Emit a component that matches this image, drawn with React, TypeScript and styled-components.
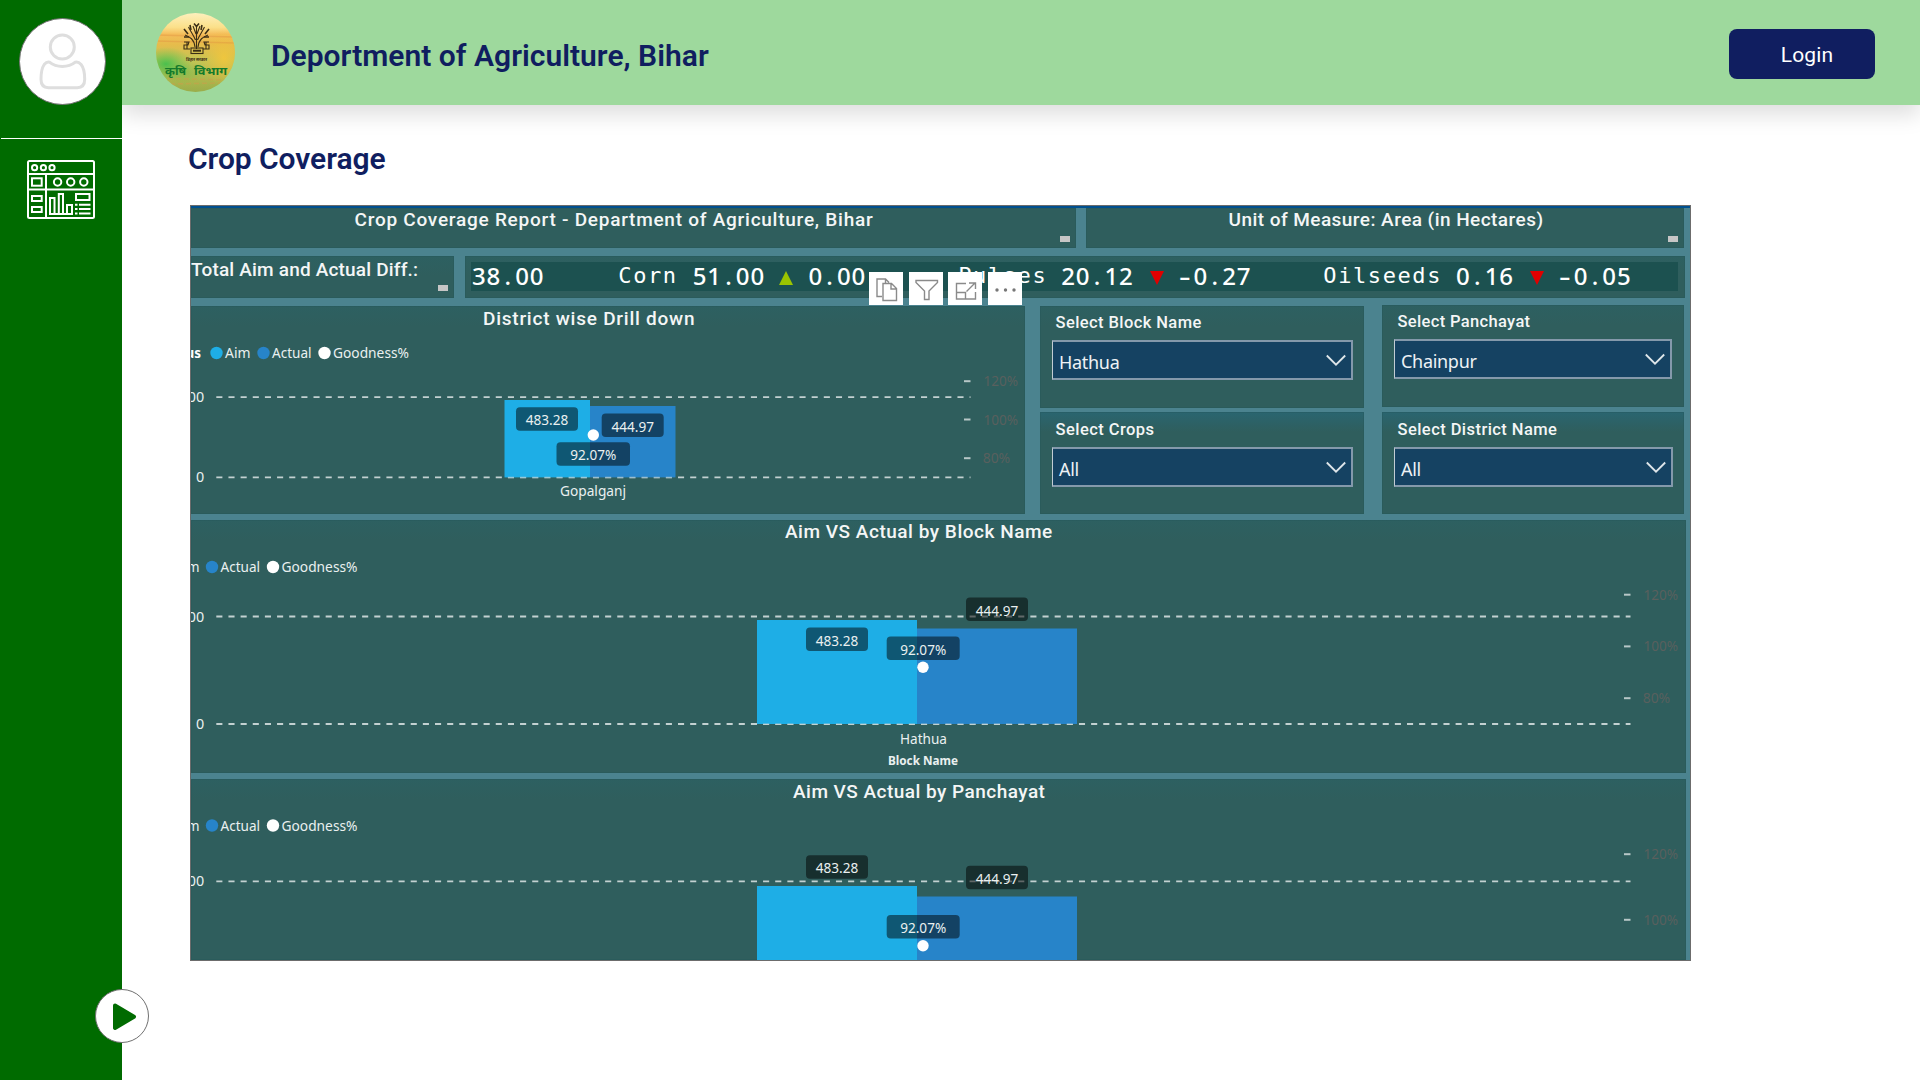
import React from 'react';
import styled, { createGlobalStyle } from 'styled-components';

const GlobalStyle = createGlobalStyle`
  *, *::before, *::after { box-sizing: border-box; }
  body { margin: 0; background: #fff; font-family: Roboto, "Noto Sans", sans-serif; }
`;

const NAVY = '#101e60';
const PANEL = '#2f5e5d';
const GAP = '#4b838f';
const AIM = '#1eaee6';
const ACTUAL = '#2784c9';

/* ---------- page shell ---------- */

const Page = styled.div`
  display: flex;
  width: 1920px;
  height: 1080px;
  overflow: hidden;
  background: #fff;
`;

const Sidebar = styled.aside`
  position: relative;
  z-index: 2;
  flex: none;
  display: flex;
  flex-direction: column;
  align-items: center;
  width: 122px;
  background: #006b00;
`;

const Avatar = styled.div`
  width: 87px;
  height: 87px;
  margin: 18px 0 33px 3px;
  border: 1px solid #707070;
  border-radius: 50%;
  background: #fff;
`;

const Divider = styled.hr`
  width: 121px;
  height: 1px;
  margin: 0 0 0 1px;
  border: 0;
  background: #fff;
`;

const NavItem = styled.a`
  display: block;
  margin-top: 21px;
  height: 59px;
`;

const ExpandButton = styled.button`
  position: absolute;
  right: -27px;
  bottom: 37px;
  width: 54px;
  height: 54px;
  padding: 0;
  border: 1px solid #707070;
  border-radius: 50%;
  background: #fff;
`;

const Main = styled.div`
  flex: 1;
  display: flex;
  flex-direction: column;
`;

const Header = styled.header`
  flex: none;
  display: flex;
  align-items: center;
  height: 105px;
  padding: 0 45px 0 34px;
  background: #9ed99d;
  box-shadow: 0 10px 20px rgba(0, 0, 0, 0.13);
`;

const HeaderTitle = styled.h1`
  margin: 7px 0 0 36px;
  font-size: 30px;
  font-weight: 600;
  line-height: 40px;
  letter-spacing: 0.02px;
  color: ${NAVY};
`;

const LoginButton = styled.button`
  width: 146px;
  height: 50px;
  margin: 3px 0 0 auto;
  padding: 1px 0 0 10px;
  border: 0;
  border-radius: 8px;
  background: ${NAVY};
  color: #fff;
  font: 400 21px/50px Roboto, sans-serif;
  letter-spacing: 0.1px;
`;

const Content = styled.main`
  padding: 34px 0 0 68px;
`;

const PageTitle = styled.h2`
  margin: 0 0 26px -2px;
  font-size: 30px;
  font-weight: 600;
  line-height: 40px;
  letter-spacing: -0.05px;
  color: ${NAVY};
`;

/* ---------- report ---------- */

const Report = styled.section`
  position: relative;
  display: flex;
  flex-direction: column;
  width: 1501px;
  height: 756px;
  border: 1px solid #6c6c6c;
  background: ${GAP};
  overflow: hidden;
`;

const TopLine = styled.div`
  flex: none;
  height: 2px;
  background: #00508f;
`;

const Row = styled.div<{ $h: number; $gap: number; $after?: number }>`
  flex: none;
  display: flex;
  gap: ${p => p.$gap}px;
  height: ${p => p.$h}px;
  margin-bottom: ${p => p.$after ?? 0}px;
`;

const Panel = styled.div<{ $w: number; $tint?: string }>`
  flex: none;
  display: flex;
  flex-direction: column;
  width: ${p => p.$w}px;
  background: linear-gradient(${p => p.$tint ?? '#2d6061'}, ${PANEL} 20px);
  box-shadow: inset 0 0 0 1px rgba(35, 85, 90, 0.35);
  overflow: hidden;
`;

const PanelTitle = styled.h3<{ $lh: number; $ls?: number; $left?: number }>`
  flex: none;
  margin: 0;
  padding-left: ${p => p.$left ?? 0}px;
  font-size: 19px;
  font-weight: 500;
  line-height: ${p => p.$lh}px;
  letter-spacing: ${p => p.$ls ?? 0}px;
  white-space: pre;
  color: #f4f6f6;
`;

const Handle = styled.div<{ $top?: number }>`
  flex: none;
  align-self: flex-end;
  width: 10px;
  height: 6px;
  margin: ${p => p.$top ?? 5}px 6px 0 0;
  background: #c6c6c6;
`;

const Ticker = styled.div`
  display: flex;
  align-items: center;
  height: 29px;
  margin: 6px 7px 0 6px;
  padding: 0 0 2px 1px;
  background: #1c5150;
  color: #fff;
  white-space: pre;
`;

const TickerName = styled.span<{ $before: number }>`
  margin-left: ${p => p.$before}px;
  font: 400 22px/26px "DejaVu Sans Mono", monospace;
  letter-spacing: 1.6px;
`;

const TickerValue = styled.span<{ $before: number }>`
  margin-left: ${p => p.$before}px;
  font: 500 24px/26px "Noto Sans", sans-serif;
  letter-spacing: 0.85px;
`;

const Point = styled.span`
  padding: 0 3.3px;
`;

const Minus = styled.span`
  display: inline-block;
  width: 15px;
  transform: scaleX(1.5);
  transform-origin: left;
`;

const SelectColumn = styled.div<{ $w: number; $raise?: number; $left?: number }>`
  display: grid;
  grid-template-rows: 102px 102px;
  gap: ${p => 4 + (p.$raise ?? 0)}px;
  width: ${p => p.$w}px;
  margin: ${p => -(p.$raise ?? 0)}px 0 0 ${p => p.$left ?? 0}px;
`;

const SelectLabel = styled.label<{ $lh: number; $ls: number }>`
  padding-left: 15.5px;
  font-size: 16.5px;
  font-weight: 500;
  line-height: ${p => p.$lh}px;
  letter-spacing: ${p => p.$ls}px;
  color: #f4f6f6;
`;

const SelectBox = styled.div<{ $w: number }>`
  display: flex;
  justify-content: space-between;
  width: ${p => p.$w}px;
  height: 40px;
  margin-left: 12px;
  padding: 3px 5px 0 6px;
  border: 2px solid #8499ab;
  border-left: 1px solid #c2ccd4;
  background: #154262;
  font: 400 18px/34px "Noto Sans", sans-serif;
  letter-spacing: -0.3px;
  color: #eef2f5;
`;

const Chevron = styled.svg`
  margin-top: 9px;
`;

const Chart = styled.svg`
  display: block;
  flex: none;
  font-family: "Noto Sans", sans-serif;
`;

const Toolbar = styled.div`
  position: absolute;
  left: 678px;
  top: 66px;
  display: flex;
  gap: 5.5px;
`;

const Tool = styled.button`
  width: 34px;
  height: 33px;
  padding: 0;
  border: 0;
  background: #fff;
  svg { display: block; }
`;

/* ---------- chart parts ---------- */

type LabelBox = { x: number; y: number; w?: number; text: string };

function ChartText({ x, y, w, size = 14, children, fill = '#eaf0f0', weight = 400 }: {
  x: number; y: number; w: number; size?: number; children: string; fill?: string; weight?: number;
}) {
  return (
    <text x={x} y={y - 0.2} textLength={w} lengthAdjust="spacingAndGlyphs" fontSize={size} fontWeight={weight} fill={fill}>
      {children}
    </text>
  );
}

function DataLabel({ x, y, w = 62, text }: LabelBox) {
  const textWidth = text.endsWith('%') ? 46 : 42.5;
  return (
    <g>
      <rect x={x} y={y} width={w} height={23.5} rx={4} fill="#000" opacity={0.5} />
      <ChartText x={x + (w - textWidth) / 2} y={y + 18.3} w={textWidth}>{text}</ChartText>
    </g>
  );
}

function Legend({ x, y, lead }: { x: number; y: number; lead: 'full' | 'short' }) {
  return (
    <g>
      {lead === 'full' ? (
        <>
          <ChartText x={185.5} y={y + 5.5} w={15.5} weight={700} fill="#fff">us</ChartText>
          <circle cx={216.5} cy={y} r={6.2} fill={AIM} />
          <ChartText x={225} y={y + 5.5} w={25.5}>Aim</ChartText>
        </>
      ) : (
        <ChartText x={187} y={y + 5.5} w={12.5}>m</ChartText>
      )}
      <circle cx={x} cy={y} r={6.2} fill={ACTUAL} />
      <ChartText x={x + 8.5} y={y + 5.5} w={39.5}>Actual</ChartText>
      <circle cx={x + 61} cy={y} r={6.2} fill="#fff" />
      <ChartText x={x + 69.5} y={y + 5.5} w={76}>Goodness%</ChartText>
    </g>
  );
}

function GridLine({ y, to, opacity = 1 }: { y: number; to: number; opacity?: number }) {
  return (
    <line x1={216.3} x2={to} y1={y} y2={y} stroke="#c3d1d1" strokeWidth={1.8} strokeDasharray="6.1 6.05" opacity={opacity} />
  );
}

function AxisTick({ x, y, text }: { x: number; y: number; text: string }) {
  return (
    <g>
      <rect x={x} y={y - 1} width={6.5} height={2} fill="#b7c7c7" />
      <ChartText x={text.length > 3 ? x + 19.5 : x + 18.7} y={y + 5.2} w={text.length > 3 ? 34.5 : 27.5} fill="#59605e">{text}</ChartText>
    </g>
  );
}

function BarChart({ box, legendX, legendY, lead, top, base, right, x0, x1, x2, y1, y2, ticks, labels, dot, children }: {
  box: [number, number, number, number]; legendX: number; legendY: number; lead: 'full' | 'short';
  top: number; base?: number; right: number; x0: number; x1: number; x2: number; y1: number; y2: number;
  ticks: [number, string][]; labels: LabelBox[]; dot: [number, number]; children?: React.ReactNode;
}) {
  const floor = base ?? 965;
  return (
    <Chart width={box[2]} height={box[3]} viewBox={box.join(' ')}>
      <Legend x={legendX} y={legendY} lead={lead} />
      <ChartText x={187.7} y={top + 5.2} w={16.4}>00</ChartText>
      <GridLine y={top} to={right} />
      {base && <ChartText x={196} y={base + 5.2} w={8.2}>0</ChartText>}
      {base && <GridLine y={base} to={right} />}
      <rect x={x0} y={y1} width={x1 - x0} height={floor - y1} fill={AIM} />
      <rect x={x1} y={y2} width={x2 - x1} height={floor - y2} fill={ACTUAL} />
      {base && (
        <svg x={x0} y={base - 2} width={x2 - x0} height={4} viewBox={`${x0} ${base - 2} ${x2 - x0} 4`}>
          <GridLine y={base} to={right} opacity={0.35} />
        </svg>
      )}
      {ticks.map(([y, text]) => <AxisTick key={text} x={right - 6.5} y={y} text={text} />)}
      {labels.map(l => <DataLabel key={l.text} {...l} />)}
      <circle cx={dot[0]} cy={dot[1]} r={5.7} fill="#fff" />
      {children}
    </Chart>
  );
}

function SelectPanel({ w, boxW, label, value, lh, ls }: { w: number; boxW: number; label: string; value: string; lh: number; ls: number }) {
  return (
    <Panel $w={w} $tint={lh > 34 ? '#2a6570' : undefined}>
      <SelectLabel $lh={lh} $ls={ls}>{label}</SelectLabel>
      <SelectBox $w={boxW}>
        {value}
        <Chevron width="20" height="14" viewBox="0 0 20 14" fill="none" stroke="#dfe6ea" strokeWidth="1.8">
          <path d="M0.8 1.5 10 10.7 19.2 1.5" />
        </Chevron>
      </SelectBox>
    </Panel>
  );
}

function Num({ before, children }: { before: number; children: string }) {
  const negative = children.startsWith('-');
  const [whole, fraction] = children.replace('-', '').split('.');
  return (
    <TickerValue $before={before}>
      {negative && <Minus>-</Minus>}{whole}<Point>.</Point>{fraction}
    </TickerValue>
  );
}

const Arrow = styled.svg<{ $before: number }>`
  margin-left: ${p => p.$before}px;
  margin-top: 4px;
`;

function Trend({ up, before }: { up?: boolean; before: number }) {
  return (
    <Arrow $before={before} width="14" height="14" viewBox="0 0 14 14">
      {up ? <path d="M7 0 14 14H0Z" fill="#9bc400" /> : <path d="M0 0H14L7 14Z" fill="#e00000" />}
    </Arrow>
  );
}

/* ---------- icons ---------- */

function UserIcon() {
  return (
    <svg width="85" height="85" viewBox="20 19 85 85" fill="none" stroke="#dedede" strokeWidth="3">
      <circle cx="62.3" cy="47" r="12" />
      <path d="M49.5 62.2c3.4 2.8 7.8 4.3 12.8 4.3s9.600-1.500 13-4.300c1.800-.4 4.200.5 5.800 2.300 2.600 3.200 3.600 8.500 3.600 14.800 0 5.300-2.700 8.400-7.400 8.400H48.400c-4.700 0-7.400-3.100-7.400-8.400 0-6.300 1-11.600 3.200-14.800 1.500-1.800 3.500-2.700 5.300-2.300Z" />
    </svg>
  );
}

function DashboardIcon() {
  return (
    <svg width="68" height="59" viewBox="27 160 68 59" fill="none" stroke="#fff" strokeWidth="2">
      <rect x="28" y="161" width="66" height="57" rx="1.500" />
      <path d="M28 174H94M28 189.500H94M46 174V218" />
      <circle cx="34.600" cy="167.700" r="2.600" />
      <circle cx="43.400" cy="167.700" r="2.600" />
      <circle cx="52" cy="167.700" r="2.600" />
      <rect x="32" y="178.300" width="9.700" height="7.400" />
      <rect x="32" y="196" width="9.700" height="5" />
      <rect x="32" y="207" width="9.700" height="5" />
      <circle cx="57.600" cy="182" r="3.700" />
      <circle cx="70.700" cy="182" r="3.700" />
      <circle cx="83.800" cy="182" r="3.700" />
      <path d="M50 214V198H54.500V214M58.800 214V194H63V214M67 214V205H72V214M49 214H73" />
      <rect x="76" y="194" width="13.500" height="6" />
      <path d="M75 204.800H77.500M79 204.800H90.500M75 209H77.500M79 209H90.500M75 213.400H77.500M79 213.400H90.500" />
    </svg>
  );
}

function PlayIcon() {
  return (
    <svg width="52" height="52" viewBox="96 990 52 52">
      <path d="M115 1005.500 134 1016.700 115 1028Z" fill="#006b00" stroke="#006b00" strokeWidth="4" strokeLinejoin="round" />
    </svg>
  );
}

function Logo() {
  return (
    <svg width="79" height="79" viewBox="156 13 79 79">
      <defs>
        <linearGradient id="sky" x1="0" y1="0" x2="0" y2="1">
          <stop offset="0" stopColor="#fdf0bd" />
          <stop offset="0.18" stopColor="#fbe08a" />
          <stop offset="0.27" stopColor="#f5bd5a" />
          <stop offset="0.4" stopColor="#e6bc4c" />
          <stop offset="0.6" stopColor="#c3c555" />
          <stop offset="0.8" stopColor="#b3b94e" />
          <stop offset="1" stopColor="#9aad4a" />
        </linearGradient>
        <radialGradient id="field">
          <stop offset="0" stopColor="#35bf4c" stopOpacity="0.85" />
          <stop offset="1" stopColor="#5cc251" stopOpacity="0" />
        </radialGradient>
        <radialGradient id="glow">
          <stop offset="0" stopColor="#f6c63a" stopOpacity="0.85" />
          <stop offset="1" stopColor="#f0c040" stopOpacity="0" />
        </radialGradient>
        <clipPath id="disc"><circle cx="195.500" cy="52.500" r="39.500" /></clipPath>
      </defs>
      <g clipPath="url(#disc)">
        <rect x="156" y="13" width="79" height="79" fill="url(#sky)" />
        <ellipse cx="224" cy="58" rx="24" ry="28" fill="url(#glow)" />
        <ellipse cx="166" cy="64" rx="26" ry="17" fill="url(#field)" />
        <ellipse cx="184" cy="72" rx="22" ry="12" fill="url(#field)" opacity="0.4" />
        <path d="M156 35 235 37M156 41 235 43" stroke="#dd8b3c" strokeWidth="1.500" opacity="0.35" />
        <path d="M160 78 225 80M170 84 220 83" stroke="#cf9c49" strokeWidth="1.500" opacity="0.5" strokeDasharray="5 3" />
      </g>
      <g fill="none" stroke="#3b2e16" strokeWidth="1.100">
        <path d="M196.500 49V25M195 47c-1-8-5-10-10-12M198 47c1-8 5-10 10-12M195.500 40c-2-5-4-7-7-13M197.500 40c2-5 4-7 7-13M196 34l-3-8M197 34l3-8" />
        <path d="M184 29l4 5M209 29l-4 5M184 37l5 0M209 37l-5 0M190 25l1 5M202 25l-1 5M194 23.500l2.500 3 2.500-3" strokeWidth="1.600" />
        <path d="M184 42h5l-1 3h-4v4h6M209 42h-5l1 3h4v4h-6M187 42v7M206 42v7" />
        <rect x="191" y="48" width="12" height="5.500" />
        <path d="M193 50.700H201" strokeWidth="2" />
      </g>
      <g fontFamily="Noto Sans Devanagari, Noto Sans, sans-serif" fontWeight="700">
        <text x="186" y="61" fontSize="4.500" textLength="21" lengthAdjust="spacingAndGlyphs" fill="#3b2e16">बिहार सरकार</text>
        <g fontSize="11.500" fill="#157a2b">
          <text x="165" y="74.500" textLength="21" lengthAdjust="spacingAndGlyphs">कृषि</text>
          <text x="194" y="74.500" textLength="33" lengthAdjust="spacingAndGlyphs">विभाग</text>
        </g>
      </g>
    </svg>
  );
}

function Tools() {
  const stroke = { fill: 'none', stroke: '#8a8a8a', strokeWidth: 1.4 };
  return (
    <Toolbar>
      <Tool><svg width="34" height="33" viewBox="0 0 34 33" {...stroke}>
        <path d="M13 24.500H8V7H16.500L20 10.500M14 11.500H22.500L27.500 16.500V28.500H14ZM22 11.500V17H27.500M16.500 7V11" />
      </svg></Tool>
      <Tool><svg width="34" height="33" viewBox="0 0 34 33" {...stroke}>
        <path d="M7 8.500H28.500V10.500L20 19V27.500H15.500V19L7 10.500Z" />
      </svg></Tool>
      <Tool><svg width="34" height="33" viewBox="0 0 34 33" {...stroke}>
        <path d="M18 11.500H8.500V27H27.500V20M8.500 20.500H17.500V27M18.500 19.500 27 11M21 11H27.500V17" />
      </svg></Tool>
      <Tool><svg width="34" height="33" viewBox="0 0 34 33" fill="#777">
        <circle cx="9" cy="18" r="1.700" /><circle cx="17.500" cy="18" r="1.700" /><circle cx="26" cy="18" r="1.700" />
      </svg></Tool>
    </Toolbar>
  );
}

/* ---------- app ---------- */

export default function App() {
  return (
    <Page>
      <GlobalStyle />
      <Sidebar>
        <Avatar><UserIcon /></Avatar>
        <Divider />
        <NavItem><DashboardIcon /></NavItem>
        <ExpandButton><PlayIcon /></ExpandButton>
      </Sidebar>
      <Main>
        <Header>
          <Logo />
          <HeaderTitle>Deportment of Agriculture, Bihar</HeaderTitle>
          <LoginButton>Login</LoginButton>
        </Header>
        <Content>
          <PageTitle>Crop Coverage</PageTitle>
          <Report>
            <TopLine />
            <Row $h={40} $gap={10} $after={8}>
              <Panel $w={885} $tint={PANEL}>
                <PanelTitle $lh={23} $left={163.5} $ls={0.75}>Crop Coverage Report - Department of Agriculture, Bihar</PanelTitle>
                <Handle />
              </Panel>
              <Panel $w={598} $tint={PANEL}>
                <PanelTitle $lh={23} $left={142.5} $ls={0.45}>Unit of Measure: Area (in Hectares)</PanelTitle>
                <Handle />
              </Panel>
            </Row>
            <Row $h={42} $gap={11} $after={8}>
              <Panel $w={263}>
                <PanelTitle $lh={27} $ls={0.18}>Total Aim and Actual Diff.:</PanelTitle>
                <Handle $top={2} />
              </Panel>
              <Panel $w={1220}>
                <Ticker>
                  <Num before={0}>38.00</Num>
                  <TickerName $before={74}>Corn</TickerName>
                  <Num before={15}>51.00</Num>
                  <Trend up before={14} />
                  <Num before={15.5}>0.00</Num>
                  <TickerName $before={92}>Pulses</TickerName>
                  <Num before={14}>20.12</Num>
                  <Trend before={16} />
                  <Num before={15}>-0.27</Num>
                  <TickerName $before={72}>Oilseeds</TickerName>
                  <Num before={14}>0.16</Num>
                  <Trend before={16} />
                  <Num before={15}>-0.05</Num>
                </Ticker>
              </Panel>
            </Row>
            <Row $h={208} $gap={15} $after={6}>
              <Panel $w={834}>
                <PanelTitle $lh={25} $left={292} $ls={0.76}>District wise Drill down</PanelTitle>
                <BarChart
                  box={[191, 331, 834, 183]} legendX={263.5} legendY={353} lead="full"
                  top={397.2} base={477.4} right={970.5} x0={504.5} x1={590} x2={675.5} y1={400} y2={406}
                  ticks={[[381.2, '120%'], [419.5, '100%'], [458.2, '80%']]}
                  labels={[{ x: 516, y: 407.3, text: '483.28' }, { x: 601.7, y: 413.5, text: '444.97' }, { x: 556.5, y: 442.3, w: 73.5, text: '92.07%' }]}
                  dot={[593.3, 435]}
                >
                  <ChartText x={560} y={496.6} w={66}>Gopalganj</ChartText>
                </BarChart>
              </Panel>
              <SelectColumn $w={324}>
                <SelectPanel w={324} boxW={301} label="Select Block Name" value="Hathua" lh={34} ls={0.41} />
                <SelectPanel w={324} boxW={301} label="Select Crops" value="All" lh={35} ls={0.45} />
              </SelectColumn>
              <SelectColumn $w={302} $raise={1} $left={3}>
                <SelectPanel w={302} boxW={278} label="Select Panchayat" value="Chainpur" lh={34} ls={0.34} />
                <SelectPanel w={302} boxW={279} label="Select District Name" value="All" lh={35} ls={0.44} />
              </SelectColumn>
            </Row>
            <Row $h={253} $gap={0} $after={6}>
              <Panel $w={1495}>
                <PanelTitle $lh={24} $left={594} $ls={0.52}>Aim VS Actual by Block Name</PanelTitle>
                <BarChart
                  box={[191, 544, 1495, 229]} legendX={212} legendY={567} lead="short"
                  top={616.5} base={724} right={1630.5} x0={757} x1={917} x2={1077} y1={620} y2={628.5}
                  ticks={[[594.7, '120%'], [646.4, '100%'], [698.2, '80%']]}
                  labels={[{ x: 806, y: 627.4, text: '483.28' }, { x: 966, y: 597.5, text: '444.97' }, { x: 886.7, y: 636.4, w: 73, text: '92.07%' }]}
                  dot={[923, 667.2]}
                >
                  <ChartText x={900} y={743.7} w={47}>Hathua</ChartText>
                  <ChartText x={888} y={765.2} w={70} size={12.5} weight={700}>Block Name</ChartText>
                </BarChart>
              </Panel>
            </Row>
            <Row $h={181} $gap={0}>
              <Panel $w={1495}>
                <PanelTitle $lh={26} $left={602} $ls={0.47}>Aim VS Actual by Panchayat</PanelTitle>
                <BarChart
                  box={[191, 805, 1495, 155]} legendX={212} legendY={825.5} lead="short"
                  top={881.4} right={1630.5} x0={757} x1={917} x2={1077} y1={886} y2={896.5}
                  ticks={[[854.2, '120%'], [919.8, '100%']]}
                  labels={[{ x: 806, y: 855.3, text: '483.28' }, { x: 966, y: 865.7, text: '444.97' }, { x: 886.7, y: 915, w: 73, text: '92.07%' }]}
                  dot={[923, 945.7]}
                />
              </Panel>
            </Row>
            <Tools />
          </Report>
        </Content>
      </Main>
    </Page>
  );
}
